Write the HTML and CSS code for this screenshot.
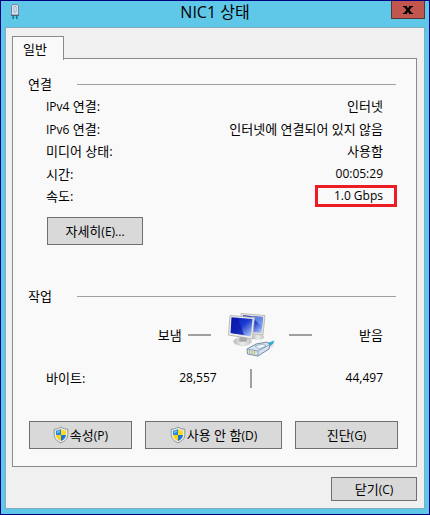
FILE: index.html
```html
<!DOCTYPE html>
<html lang="ko">
<head>
<meta charset="utf-8">
<title>NIC1 상태</title>
<link rel="stylesheet" href="styles.css">
</head>
<body>
<svg class="defs" aria-hidden="true">
  <defs>
    <linearGradient id="screen" x1="0" y1="0" x2="1" y2="1">
      <stop offset="0" stop-color="#0718b8"/><stop offset=".5" stop-color="#1c3bd0"/><stop offset="1" stop-color="#c4dcfa"/>
    </linearGradient>
    <linearGradient id="base" x1="0" y1="0" x2="1" y2="0">
      <stop offset="0" stop-color="#b8b8b8"/><stop offset=".5" stop-color="#eeeeee"/><stop offset="1" stop-color="#c2c2c2"/>
    </linearGradient>
    <symbol id="shield" viewBox="0 0 16 18">
      <path d="M8 1C6 2.600 3.500 3.200 1.200 3.200V8.500C1.200 12.500 4 15.300 8 16.800C12 15.300 14.800 12.500 14.800 8.500V3.200C12.500 3.200 10 2.600 8 1Z" fill="#e9eceb" stroke="#8f9595"/>
      <path d="M8 3Q5.500 4.600 3 4.800V9H8Z" fill="#2587dc"/>
      <path d="M8 3Q10.500 4.600 13 4.800V9H8Z" fill="#ffdc22"/>
      <path d="M3 9H8V15Q3.500 13 3 9Z" fill="#fbd316"/>
      <path d="M13 9H8V15Q12.500 13 13 9Z" fill="#1a75cc"/>
      <path d="M4 5.500L7 4.600V6L4 7.500Z" fill="#73bdf2"/>
    </symbol>
  </defs>
</svg>
<main class="window">
  <header class="titlebar">
    <svg class="plug" viewBox="0 0 10 17" aria-hidden="true">
      <path d="M2.500 .5H7.500L8.500 2V11H1.500V2Z" fill="#d5e3ef" stroke="#75829c"/>
      <path d="M4 2.500H6V8H4Z" fill="#f8fcff" stroke="#8190ab" stroke-width=".7"/>
      <path d="M1 11.500H9" stroke="#52617a"/>
      <path d="M3.500 12V15M6.500 12V15" stroke="#147895" stroke-width="2"/>
      <path d="M5 12V16" stroke="#8be6f3"/>
    </svg>
    <h1 class="title">NIC1 상태</h1>
    <button class="close" type="button" aria-label="닫기">
      <svg viewBox="0 0 10 8" aria-hidden="true"><path d="M0 0H4V1L5 2L6 1V0H10V1H9L6.500 4L9 7H10V8H6V7L5 6L4 7V8H0V7H1L3.500 4L1 1H0Z"/></svg>
    </button>
  </header>
  <div class="client">
    <div class="tabs" role="tablist">
      <button class="tab" type="button" role="tab" aria-selected="true">일반</button>
    </div>
    <div class="panel" role="tabpanel">
      <section>
        <h2 class="heading">연결</h2>
        <dl class="stats">
          <div class="stat"><dt><span class="latin">IPv4</span> 연결:</dt><dd>인터넷</dd></div>
          <div class="stat"><dt><span class="latin">IPv6</span> 연결:</dt><dd>인터넷에 연결되어 있지 않음</dd></div>
          <div class="stat"><dt>미디어 상태:</dt><dd>사용함</dd></div>
          <div class="stat"><dt>시간:</dt><dd class="latin">00:05:29</dd></div>
          <div class="stat"><dt>속도:</dt><dd class="latin speed">1.0 Gbps</dd></div>
        </dl>
        <button class="button details" type="button"><span>자세히<span class="latin">(E)...</span></span></button>
      </section>
      <section class="activity">
        <h2 class="heading">작업</h2>
        <div class="traffic">
          <div class="sent-head"><span>보냄</span><span class="dash"></span></div>
          <svg class="computers" viewBox="0 0 48 48" aria-hidden="true">
            <ellipse cx="31" cy="26" rx="6" ry="3" fill="url(#base)"/>
            <path d="M14 2.500L38 4.500L36 24L15 22Z" fill="#e2e2dc" stroke="#b2b2ac" stroke-width=".8"/>
            <path d="M16 4.300L36 6L34.500 22L17 20Z" fill="url(#screen)"/>
            <path d="M24 5L36 6L35 16Q28 9 24 5Z" fill="#86acef" opacity=".65"/>
            <ellipse cx="15.500" cy="30.500" rx="9" ry="4" fill="url(#base)" stroke="#c2c2c2" stroke-width=".5"/>
            <path d="M13 25L20 26V30Q16 32 12 30Z" fill="#aaa"/>
            <path d="M3 4.500L27.500 6.500L25.500 28L1.500 24Z" fill="#eeeeea" stroke="#aaaaa5" stroke-width=".8"/>
            <path d="M4.500 6.300L25.500 8L24 25.500L3.500 22Z" fill="url(#screen)"/>
            <path d="M5 7L11 7.500L17 24L4 22Z" fill="#0716a1" opacity=".65"/>
            <path d="M40 32L47.500 29.500L46 33L42 36Z" fill="#35add5"/>
            <path d="M41 36L47 35" stroke="#c2dbe7"/>
            <path d="M20 38L29 33L40 31L43 34L42 38L31 45L20.500 43Z" fill="#d3e2ee" stroke="#6b809c" stroke-width=".9"/>
            <path d="M20 38L31 40L42 34M31 40V45" fill="none" stroke="#8196af" stroke-width=".8"/>
            <path d="M28 35L36 33L39 35L32 38Z" fill="#eef7fb" stroke="#7190b0" stroke-width=".6"/>
            <path d="M22.500 39V42M25 39.500V43M27.500 40V43.500" stroke="#c4b64f"/>
          </svg>
          <div class="received-head"><span class="dash"></span><span>받음</span></div>
          <div class="sent"><span>바이트:</span><span class="latin">28,557</span></div>
          <span class="divider"></span>
          <div class="received latin">44,497</div>
        </div>
      </section>
      <div class="actions">
        <button class="button" type="button"><svg class="shield" aria-hidden="true"><use href="#shield"/></svg><span>속성<span class="latin">(P)</span></span></button>
        <button class="button" type="button"><svg class="shield" aria-hidden="true"><use href="#shield"/></svg><span>사용 안 함<span class="latin">(D)</span></span></button>
        <button class="button" type="button"><span>진단<span class="latin">(G)</span></span></button>
      </div>
    </div>
    <footer class="footer">
      <button class="button dismiss" type="button"><span>닫기<span class="latin">(C)</span></span></button>
    </footer>
  </div>
</main>
</body>
</html>
```
FILE: styles.css
```css
* { box-sizing: border-box; }
body, h1, h2, dl, dd { margin: 0; }
body, button {
  font-family: "Open Sans", "Noto Sans CJK KR", sans-serif;
  font-size: 13px;
  line-height: 22px;
  color: #000;
}
.defs { position: absolute; width: 0; height: 0; }
.latin { font-size: 12px; }
.window {
  display: flex;
  flex-direction: column;
  min-height: 100vh;
  padding: 0 4px 5px;
  border: 1px solid #000080;
  background: #5fc8e9;
}
.titlebar {
  display: grid;
  grid-template-columns: 34px 1fr 34px;
  height: 26px;
}
.plug { width: 10px; height: 17px; margin: 3px 0 0 5px; }
.title {
  font-size: 16px;
  font-weight: 400;
  line-height: 22px;
  text-align: center;
}
.close {
  display: flex;
  align-items: center;
  justify-content: center;
  height: 18px;
  padding: 0;
  border: 1px solid #5b3436;
  border-top: 0;
  background: #c1564f;
}
.close svg { width: 10px; height: 8px; }
.client {
  flex: 1;
  padding: 8px 7px 7px 6px;
  border: 1px solid #7eafc1;
  background: #f0f0f0;
}
.tabs { display: flex; }
.tab {
  position: relative;
  width: 52px;
  height: 24px;
  margin-bottom: -2px;
  padding: 0 14px 0 8px;
  border: 1px solid #898991;
  border-bottom: 0;
  background: #f9f9f9;
  line-height: 20px;
  white-space: nowrap;
}
.panel {
  padding: 14px 19px 17px 15px;
  border: 1px solid #898991;
  background: #f9f9f9;
}
.heading {
  display: grid;
  grid-template-columns: 49px 1fr;
  align-items: center;
  margin-right: 1px;
  font-size: 13px;
  font-weight: 400;
}
.heading::after { content: ""; height: 1px; background: #a0a0a0; }
.stats {
  display: flex;
  flex-direction: column;
  justify-content: space-between;
  min-height: 112px;
  padding: 0 14px 0 18px;
}
.stat { display: flex; justify-content: space-between; height: 22px; }
.speed {
  margin-right: -14px;
  padding: 0 11px 0 16px;
  border: 3px solid #ed1c24;
  line-height: 16px;
}
.button {
  display: flex;
  align-items: center;
  justify-content: center;
  gap: 1px;
  height: 28px;
  padding: 0;
  border: 1px solid #707070;
  background: #d9d9d9;
}
.details { width: 96px; margin: 10px 0 0 19px; }
.activity { margin-top: 40px; }
.traffic {
  display: grid;
  grid-template-columns: 5fr 48px 3fr;
  align-items: center;
  row-gap: 8px;
  margin-top: 4px;
  padding: 0 14px 0 18px;
}
.sent-head, .received-head, .sent { display: flex; align-items: center; }
.sent-head { justify-content: flex-end; gap: 6px; padding-right: 16px; }
.received-head { justify-content: space-between; padding-left: 14px; }
.sent { justify-content: space-between; padding-right: 10px; }
.received { text-align: right; }
.dash { width: 23px; height: 2px; background: #a0a0a0; }
.computers { width: 48px; height: 48px; }
.divider { justify-self: center; width: 2px; height: 19px; background: #a0a0a0; }
.actions {
  display: grid;
  grid-template-columns: 3fr 4fr 3fr;
  gap: 13px;
  margin: 32px -1px 0 1px;
}
.shield { width: 16px; height: 18px; }
.footer { display: flex; justify-content: flex-end; margin-top: 10px; }
.dismiss { width: 86px; height: 24px; }
```
